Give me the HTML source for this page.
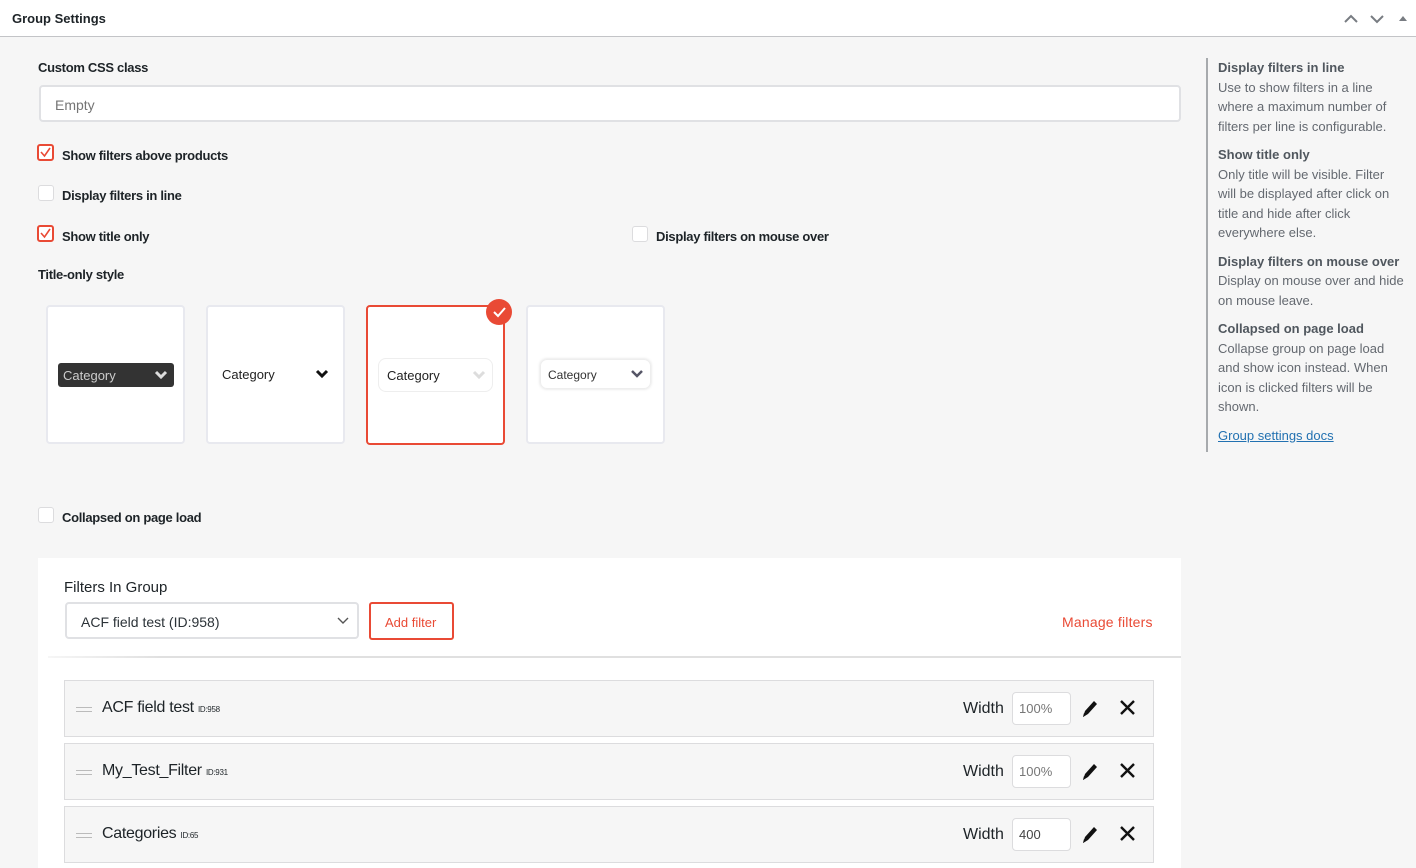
<!DOCTYPE html>
<html><head><meta charset="utf-8"><style>
*{box-sizing:border-box;margin:0;padding:0}
body{width:1416px;height:868px;overflow:hidden;background:#f6f6f6;font-family:"Liberation Sans",sans-serif;color:#1d2327;position:relative}
.abs{position:absolute}
.hdr{left:0;top:0;width:1416px;height:37px;background:#fff;border-bottom:1px solid #c3c4c7}
.lbl{font-size:13px;font-weight:600;color:#1d2327;letter-spacing:-0.3px}
.cb{width:16px;height:16px;border:1px solid #dcdcde;border-radius:3px;background:#fff}
.cb.on{border:2px solid #e94a35;width:17px;height:17px}
.card{width:139px;height:139px;background:#fff;border:2px solid #e8e9ef;border-radius:4px}
.row{left:64px;width:1090px;height:57px;background:#f6f6f6;border:1px solid #dcdcde}
.row .t{position:absolute;left:37px;top:18px;font-size:16px;letter-spacing:-0.3px}
.row .t small{font-size:8px}
.row .h{position:absolute;left:11px;top:26px;width:16px;height:5px;border-top:1px solid #bbb;border-bottom:1px solid #bbb}
.row .w{position:absolute;left:898px;top:19px;font-size:16px}
.row .in{position:absolute;left:947px;top:11px;width:59px;height:33px;background:#fff;border:1px solid #dcdcde;border-radius:4px;font-size:13px;color:#777;padding:8px 6px}
.side{font-size:13px;color:#646970;line-height:19.5px}
.side b{color:#50575e}
</style></head><body>
<div class="abs hdr"><div class="abs" style="left:12px;top:11px;font-size:13px;font-weight:600;color:#1d2327">Group Settings</div>
<svg class="abs" style="left:1340px;top:10px" width="70" height="16"><path d="M5 12l6-6 6 6" stroke="#787c82" stroke-width="2" fill="none"/><path d="M31 6l6 6 6-6" stroke="#787c82" stroke-width="2" fill="none"/><path d="M59 11l4-5 4 5z" fill="#787c82"/></svg></div>

<div class="abs lbl" style="left:38px;top:60px">Custom CSS class</div>
<div class="abs" style="left:39px;top:85px;width:1142px;height:37px;background:#fff;border:2px solid #e0e1e4;border-radius:4px;font-size:14px;color:#757575;padding:10px 14px">Empty</div>

<div class="abs cb on" style="left:37px;top:144px"></div><svg class="abs" style="left:37px;top:144px" width="17" height="17"><path d="M4 8l3.5 4L13 4" stroke="#e94a35" stroke-width="1.6" fill="none"/></svg>
<div class="abs lbl" style="left:62px;top:148px">Show filters above products</div>
<div class="abs cb" style="left:38px;top:185px"></div>
<div class="abs lbl" style="left:62px;top:188px">Display filters in line</div>
<div class="abs cb on" style="left:37px;top:225px"></div><svg class="abs" style="left:37px;top:225px" width="17" height="17"><path d="M4 8l3.5 4L13 4" stroke="#e94a35" stroke-width="1.6" fill="none"/></svg>
<div class="abs lbl" style="left:62px;top:229px">Show title only</div>
<div class="abs cb" style="left:632px;top:226px"></div>
<div class="abs lbl" style="left:656px;top:229px">Display filters on mouse over</div>
<div class="abs lbl" style="left:38px;top:267px">Title-only style</div>

<div class="abs card" style="left:46px;top:305px"></div>
<div class="abs" style="left:58px;top:363px;width:116px;height:24px;background:#333;border-radius:3px;color:#ccc;font-size:13px;padding:5px 5px">Category</div>
<svg class="abs" style="left:154px;top:369px" width="14" height="12"><path d="M2 3l5 5 5-5" stroke="#ddd" stroke-width="3" fill="none"/></svg>
<div class="abs card" style="left:206px;top:305px"></div>
<div class="abs" style="left:222px;top:367px;font-size:13px;color:#222">Category</div>
<svg class="abs" style="left:315px;top:368px" width="14" height="12"><path d="M2 3l5 5 5-5" stroke="#111" stroke-width="3" fill="none"/></svg>
<div class="abs card" style="left:366px;top:305px;border-color:#e94a35;height:140px"></div>
<div class="abs" style="left:378px;top:358px;width:115px;height:34px;border:1px solid #eee;border-radius:8px;font-size:13px;color:#222;padding:9px 8px">Category</div>
<svg class="abs" style="left:472px;top:369px" width="14" height="12"><path d="M2 3l5 5 5-5" stroke="#ddd" stroke-width="3" fill="none"/></svg>
<div class="abs" style="left:486px;top:299px;width:26px;height:26px;border-radius:50%;background:#e94a35"></div>
<svg class="abs" style="left:486px;top:299px" width="26" height="26"><path d="M8 13l4 4 7-8" stroke="#fff" stroke-width="2" fill="none"/></svg>
<div class="abs card" style="left:526px;top:305px"></div>
<div class="abs" style="left:540px;top:359px;width:111px;height:30px;border:1px solid #eee;border-radius:7px;box-shadow:0 0 3px #ddd;font-size:12px;color:#333;padding:8px 7px">Category</div>
<svg class="abs" style="left:630px;top:368px" width="14" height="12"><path d="M2 3l5 5 5-5" stroke="#556" stroke-width="2.5" fill="none"/></svg>

<div class="abs cb" style="left:38px;top:507px"></div>
<div class="abs lbl" style="left:62px;top:510px">Collapsed on page load</div>

<div class="abs" style="left:38px;top:558px;width:1143px;height:310px;background:#fff"></div>
<div class="abs" style="left:64px;top:579px;font-size:15px;color:#1d2327">Filters In Group</div>
<div class="abs" style="left:65px;top:602px;width:294px;height:37px;border:2px solid #e0e1e4;border-radius:4px;font-size:14px;color:#2c3338;padding:10px 14px">ACF field test (ID:958)</div>
<svg class="abs" style="left:337px;top:616px" width="12" height="9"><path d="M1 2l5 5 5-5" stroke="#555" stroke-width="1.4" fill="none"/></svg>
<div class="abs" style="left:369px;top:602px;width:85px;height:38px;border:2px solid #e94a35;border-radius:3px;font-size:13px;color:#e94a35;padding:11px 14px">Add filter</div>
<div class="abs" style="left:1062px;top:614px;font-size:14px;color:#e94a35;letter-spacing:0.2px">Manage filters</div>
<div class="abs" style="left:48px;top:656px;width:1133px;height:2px;background:linear-gradient(90deg,#f6f6f6,#e0e0e0 10%)"></div>

<div class="abs row" style="top:680px"><div class="h"></div><div class="t">ACF field test <small>ID:958</small></div><div class="w">Width</div><div class="in">100%</div></div>
<div class="abs row" style="top:743px"><div class="h"></div><div class="t">My_Test_Filter <small>ID:931</small></div><div class="w">Width</div><div class="in">100%</div></div>
<div class="abs row" style="top:806px"><div class="h"></div><div class="t">Categories <small>ID:65</small></div><div class="w">Width</div><div class="in" style="color:#444">400</div></div>
<svg class="abs" style="left:1080px;top:698px" width="60" height="150">
<g id="ic"><path d="M3 19l2-6 9-10 3 3-9 10z" fill="#111"/><path d="M3 19l1-4 2 2z" fill="#111"/><path d="M41 3l13 13M54 3L41 16" stroke="#111" stroke-width="2.4"/></g>
<use href="#ic" y="63"/><use href="#ic" y="126"/></svg>

<div class="abs" style="left:1206px;top:58px;width:2px;height:394px;background:#a7aaad"></div>
<div class="abs side" style="left:1218px;top:58px;width:186px">
<b>Display filters in line</b><br>Use to show filters in a line where a maximum number of filters per line is configurable.
<div style="height:9px"></div><b>Show title only</b><br>Only title will be visible. Filter will be displayed after click on title and hide after click everywhere else.
<div style="height:9px"></div><b>Display filters on mouse over</b><br>Display on mouse over and hide on mouse leave.
<div style="height:9px"></div><b>Collapsed on page load</b><br>Collapse group on page load and show icon instead. When icon is clicked filters will be shown.
<div style="height:9px"></div><span style="color:#2271b1;text-decoration:underline">Group settings docs</span>
</div>
</body></html>
